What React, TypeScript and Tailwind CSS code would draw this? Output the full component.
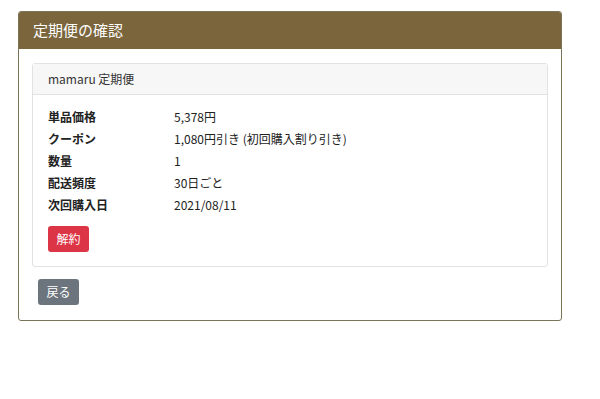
const rows: [string, string][] = [
  ["単品価格", "5,378円"],
  ["クーポン", "1,080円引き (初回購入割り引き)"],
  ["数量", "1"],
  ["配送頻度", "30日ごと"],
  ["次回購入日", "2021/08/11"],
];

export default function App() {
  return (
    <div
      className="w-[600px] h-[399px] bg-white pt-[11px] pl-[18px]"
      style={{ fontFamily: '"Noto Sans CJK JP", "Noto Sans", sans-serif' }}
    >
      <div className="w-[544px] border border-[#7b7458] rounded-[3px] overflow-hidden">
        {/* header */}
        <div className="h-[37px] bg-[#7a653d] flex items-center pl-[14px] text-white text-[15px]">
          定期便の確認
        </div>

        <div className="px-[13px] pt-[14px] pb-[15px]">
          <div className="border border-[#e2e2e2] rounded-[3px]">
            <div className="h-[31px] bg-[#f7f7f7] border-b border-[#e2e2e2] flex items-center pl-[15px] text-[12px] text-[#333]">
              mamaru 定期便
            </div>
            <div className="pl-[15px] pt-[11px] pb-[14px]">
              {rows.map(([k, v]) => (
                <div key={k} className="flex h-[22px] items-center text-[12px] text-[#222]">
                  <div className="w-[126px] font-bold">{k}</div>
                  <div>{v}</div>
                </div>
              ))}
              <button className="mt-[10px] w-[41px] h-[26px] rounded-[3px] bg-[#dc3545] text-white text-[12px] flex items-center justify-center">
                解約
              </button>
            </div>
          </div>

          <button className="mt-[12px] ml-[6px] w-[41px] h-[26px] rounded-[3px] bg-[#6c757d] text-white text-[12px] flex items-center justify-center">
            戻る
          </button>
        </div>
      </div>
    </div>
  );
}
